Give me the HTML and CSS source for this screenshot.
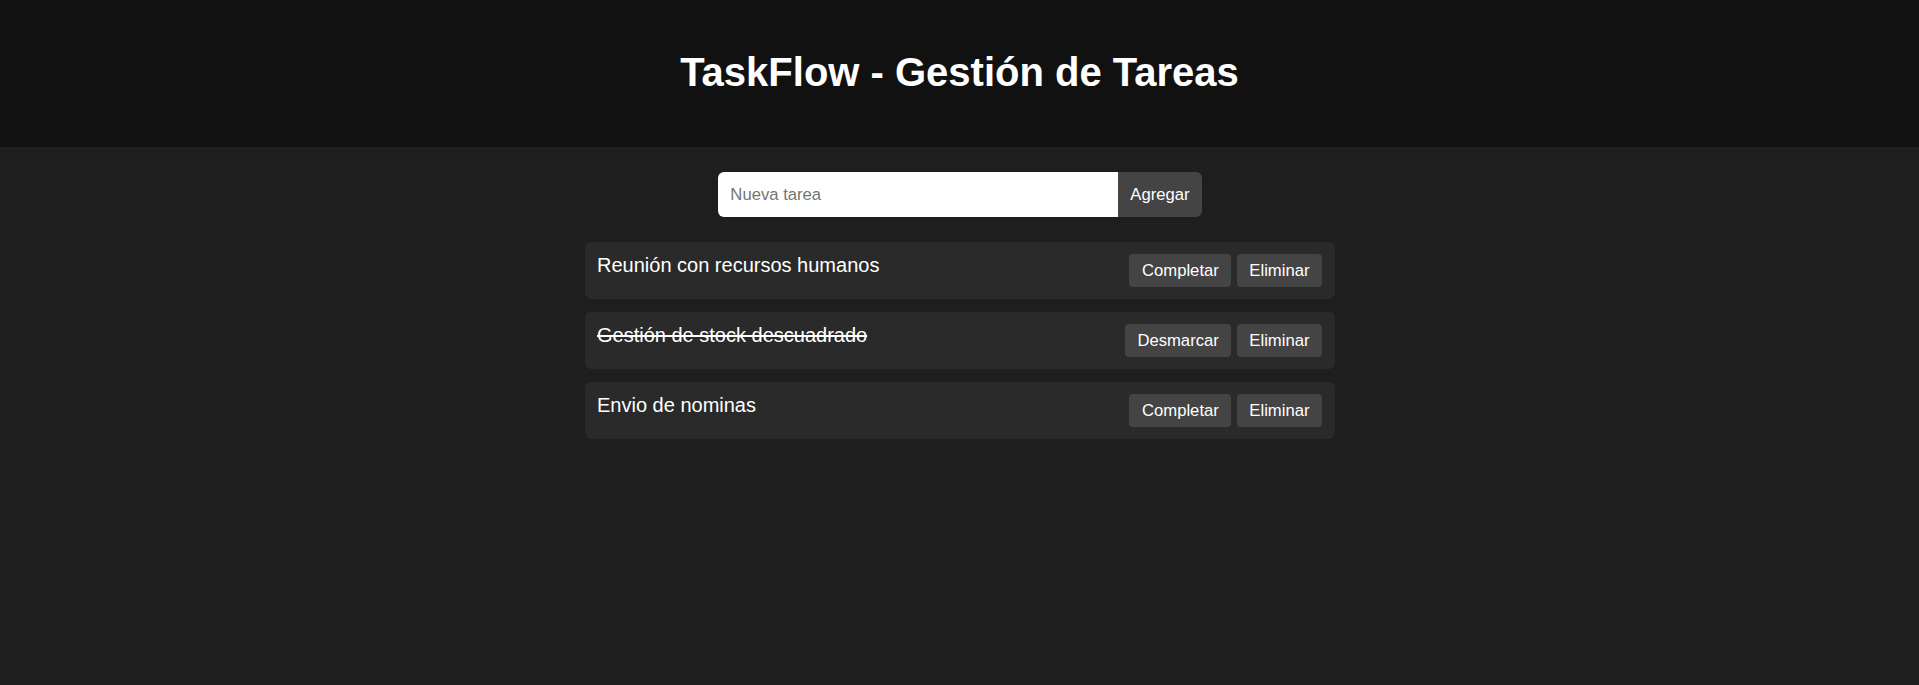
FILE: index.html
```html
<!DOCTYPE html>
<html lang="es">

<head>
    <meta charset="UTF-8">
    <meta name="viewport" content="width=device-width, initial-scale=1.0">
    <title>TaskFlow</title>
    <link rel="stylesheet" href="styles.css">
</head>

<body>
    <header class="header">
        <h1>TaskFlow - Gestión de Tareas</h1>
    </header>
    <main class="container">
        <form class="addForm">
            <input type="text" placeholder="Nueva tarea">
            <button type="button">Agregar</button>
        </form>
        <ul class="tasks">
            <li class="task">
                <span class="name">Reunión con recursos humanos</span>
                <div class="actions">
                    <button>Completar</button>
                    <button>Eliminar</button>
                </div>
            </li>
            <li class="task done">
                <span class="name">Gestión de stock descuadrado</span>
                <div class="actions">
                    <button>Desmarcar</button>
                    <button>Eliminar</button>
                </div>
            </li>
            <li class="task">
                <span class="name">Envio de nominas</span>
                <div class="actions">
                    <button>Completar</button>
                    <button>Eliminar</button>
                </div>
            </li>
        </ul>
    </main>
</body>

</html>
```

FILE: styles.css
```css
body {
    margin: 0;
    background: #1e1e1e;
    color: #fff;
    font-family: "Liberation Sans", Arial, sans-serif;
}
button {
    font-family: inherit;
    font-size: 16.67px;
    color: #fff;
    background: #444;
    border: 0;
    cursor: pointer;
}

/*--------------------------*/
.header {
    background: #111;
    padding: 49px 0 52px;
    text-align: center;
}
.header h1 {
    margin: 0;
    font-size: 40px;
    line-height: 46px;
}

.container {
    width: 750px;
    margin: 0 auto;
    padding-top: 25px;
}

.addForm {
    display: flex;
    justify-content: center;
    margin: 0;
    padding-left: 1px;
}
.addForm input {
    width: 400px;
    height: 45px;
    box-sizing: border-box;
    padding: 0 12.5px;
    border: 0;
    border-radius: 6px 0 0 6px;
    font-family: inherit;
    font-size: 16.67px;
    outline: none;
}
.addForm input::placeholder {
    color: #757575;
}
.addForm button {
    height: 45px;
    padding: 0 12.5px;
    border-radius: 0 6px 6px 0;
}

.tasks {
    list-style: none;
    margin: 25px 0 0;
    padding: 0;
}
.task {
    display: flex;
    justify-content: space-between;
    align-items: flex-start;
    background: #2a2a2a;
    border-radius: 6px;
    padding: 12px 12.5px;
    margin-bottom: 13px;
}
.task .name {
    font-size: 20px;
    line-height: 23px;
}
.task.done .name {
    text-decoration: line-through;
}
.task .actions {
    display: flex;
    gap: 5.5px;
}
.task .actions button {
    height: 33px;
    padding: 0 12.5px;
    border-radius: 4px;
}
```
